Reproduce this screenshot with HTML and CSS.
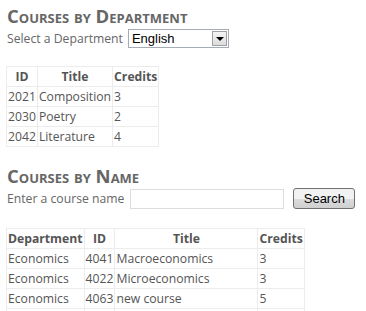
FILE: index.html
```html
<!DOCTYPE html>
<html lang="en">
  <head>
    <meta charset="UTF-8" />
    <title>Courses</title>
    <link rel="stylesheet" href="styles.css">
  </head>
  <body>
    <h2>Courses by Department</h2>
    <div class="field">
      <label>Select a Department</label>
      <div class="select">
        <span class="select-value">English</span>
        <span class="select-arrow"></span>
      </div>
    </div>

    <table class="grid first">
      <tr>
        <th>ID</th>
        <th>Title</th>
        <th>Credits</th>
      </tr>
      <tr><td>2021</td><td>Composition</td><td>3</td></tr>
      <tr><td>2030</td><td>Poetry</td><td>2</td></tr>
      <tr><td>2042</td><td>Literature</td><td>4</td></tr>
    </table>

    <h2>Courses by Name</h2>
    <div class="field">
      <label>Enter a course name</label>
      <input type="text" class="text-input" />
      <button class="search-button">Search</button>
    </div>

    <table class="grid second">
      <tr>
        <th>Department</th>
        <th>ID</th>
        <th class="wide">Title</th>
        <th>Credits</th>
      </tr>
      <tr><td>Economics</td><td>4041</td><td>Macroeconomics</td><td>3</td></tr>
      <tr><td>Economics</td><td>4022</td><td>Microeconomics</td><td>3</td></tr>
      <tr><td>Economics</td><td>4063</td><td>new course</td><td>5</td></tr>
      <tr><td>&nbsp;</td><td></td><td></td><td></td></tr>
    </table>
  </body>
</html>
```

FILE: styles.css
```css
* {
  box-sizing: border-box;
}

body {
  margin: 0;
  padding: 0 7px;
  background: #ffffff;
  color: #666666;
  font-family: "Open Sans", "Noto Sans", sans-serif;
  font-size: 12.2px;
  overflow: hidden;
}

h2 {
  margin: 5px 0 0;
  font-size: 18.5px;
  font-weight: bold;
  font-variant: small-caps;
  color: #666666;
  line-height: 22px;
}

.grid + h2 {
  margin-top: 18px;
}

.field {
  display: flex;
  align-items: center;
  height: 21px;
  margin-top: 1px;
}

.select {
  display: flex;
  align-items: center;
  width: 101px;
  height: 19px;
  margin-left: 5px;
  border: 1px solid #a5acb5;
  font-family: "Liberation Sans", Arial, sans-serif;
  font-size: 13px;
  color: #000000;
}

.select-value {
  flex: 1;
  padding-left: 3px;
}

.select-arrow {
  width: 15px;
  height: 15px;
  margin-right: 1px;
  border: 1px solid #a0a0a0;
  background: linear-gradient(#f4f4f4, #dcdcdc);
  position: relative;
}

.select-arrow::after {
  content: "";
  position: absolute;
  left: 3px;
  top: 5px;
  border-left: 4px solid transparent;
  border-right: 4px solid transparent;
  border-top: 4px solid #000000;
}

.grid {
  border-collapse: collapse;
  margin-left: -1px;
  border: 1px solid;
  border-color: #ececec #a0a0a0 #a0a0a0 #ececec;
}

.grid.first {
  margin-top: 17px;
}

.grid.second {
  margin-top: 19px;
}

.grid th,
.grid td {
  border: 1px solid #ececec;
  height: 20px;
  padding: 0 1px;
  white-space: nowrap;
}

.grid th {
  color: #555555;
  font-weight: bold;
  text-align: center;
}

.grid td {
  color: #555555;
}

.grid th.wide {
  width: 143px;
}

.text-input {
  width: 154px;
  height: 20px;
  margin-left: 6px;
  border: 1px solid #dddddd;
}

.search-button {
  margin-left: 9px;
  width: 62px;
  height: 21px;
  border: 1px solid #707070;
  border-radius: 3px;
  background: linear-gradient(#f2f2f2 50%, #dddddd 50%, #cfcfcf);
  font-family: "Liberation Sans", Arial, sans-serif;
  font-size: 13px;
  color: #000000;
  padding: 0;
}
```
